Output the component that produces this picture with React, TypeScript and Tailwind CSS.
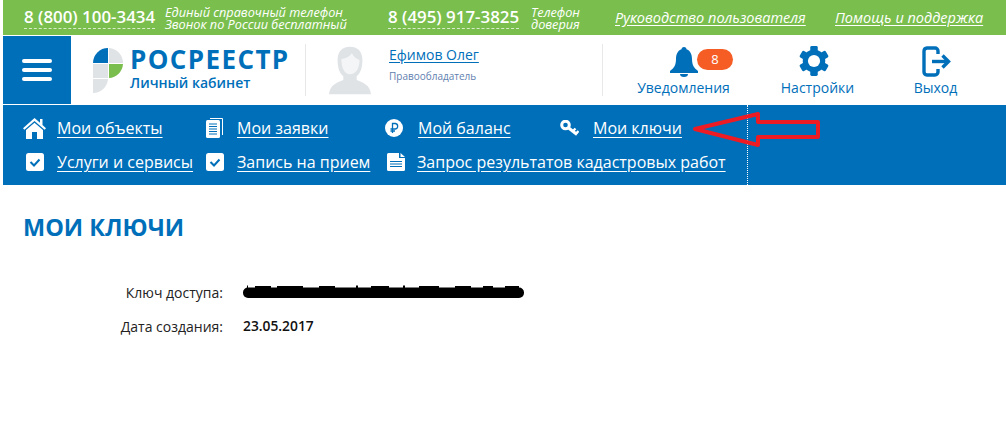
import React from "react";

const font = { fontFamily: '"Open Sans", "Noto Sans", sans-serif' };

function Logo() {
  return (
    <svg width="31" height="45" viewBox="0 0 31 45">
      <path d="M0 15 A15 15 0 0 1 15 0 V15 Z" fill="#006fba" />
      <path d="M16 0 A15 15 0 0 1 30 15 H16 Z" fill="#dfe3e6" />
      <rect x="0" y="16" width="15" height="14" fill="#dfe3e6" />
      <path d="M16 16 H30 A15 15 0 0 1 16 30 Z" fill="#7abf4d" />
      <path d="M0 31 H15 A15 15 0 0 1 0 45 Z" fill="#dfe3e6" />
    </svg>
  );
}

function Avatar() {
  return (
    <svg width="42" height="49" viewBox="0 0 44 50" fill="#dfe3e6">
      <path d="M22 0 C31 0 35 6 35 14 C35 22 33 28 29 31 V35 C36 38 43 40 44 50 H0 C1 40 8 38 15 35 V31 C11 28 9 22 9 14 C9 6 13 0 22 0 Z" />
      <path d="M13 13 C17 13 21 11 24 7 C26 11 29 13 32 14 C32 23 28 29 22 29 C16 29 13 22 13 13 Z" fill="#f4f5f6" />
    </svg>
  );
}

function Bell() {
  return (
    <svg width="28" height="30" viewBox="0 0 28 30" fill="#006fba">
      <circle cx="14" cy="2.5" r="2.5" />
      <path d="M14 2 C20 2 22 7 22 12 C22 18 24 21 28 24 V26 H0 V24 C4 21 6 18 6 12 C6 7 8 2 14 2 Z" />
      <path d="M10 27 H18 A4 3 0 0 1 10 27 Z" />
    </svg>
  );
}

function Gear() {
  return (
    <svg width="30" height="30" viewBox="0 0 32 32">
      <g fill="#006fba">
        <rect x="12" y="0" width="8" height="32" rx="1.5" />
        <rect x="12" y="0" width="8" height="32" rx="1.5" transform="rotate(60 16 16)" />
        <rect x="12" y="0" width="8" height="32" rx="1.5" transform="rotate(120 16 16)" />
        <circle cx="16" cy="16" r="12" />
      </g>
      <circle cx="16" cy="16" r="6.5" fill="#fff" />
    </svg>
  );
}

function Exit() {
  return (
    <svg width="29" height="31" viewBox="0 0 29 31" fill="none" stroke="#006fba" strokeWidth="3.4">
      <path d="M13 2 H5 A3.2 3.2 0 0 0 2 5 V26 A3.2 3.2 0 0 0 5 29 H13 A3 3 0 0 0 16 26 V23" />
      <path d="M16 8 V5 A3 3 0 0 0 13 2" />
      <path d="M10 15.5 H26" />
      <path d="M20.5 9.5 L26.5 15.5 L20.5 21.5" />
    </svg>
  );
}

function Check() {
  return (
    <svg width="18" height="18" viewBox="0 0 18 18">
      <rect width="18" height="18" rx="2.5" fill="#fff" />
      <path d="M4.5 9 L8 12.5 L13.5 6.5" fill="none" stroke="#006fba" strokeWidth="2" />
    </svg>
  );
}

function Home() {
  return (
    <svg width="23" height="21" viewBox="0 0 23 21" fill="#fff">
      <path d="M11.5 0 L17 4.8 V1 H19.5 V7 L23 10.2 L21.6 11.8 L11.5 3 L1.4 11.8 L0 10.2 Z" />
      <path d="M11.5 4.8 L20 12 V21 H14 V14 H9 V21 H3 V12 Z" />
    </svg>
  );
}

function Docs() {
  return (
    <svg width="17" height="20" viewBox="0 0 17 20">
      <path d="M4 0.5 H16.5 V17" fill="none" stroke="#fff" strokeWidth="1" />
      <rect x="0" y="2" width="14" height="18" rx="1.5" fill="#fff" />
      <path d="M3 6 H11 M3 8.5 H11 M3 11 H11 M3 13.5 H11 M3 16 H11" stroke="#006fba" strokeWidth="1" />
    </svg>
  );
}

function Ruble() {
  return (
    <svg width="18" height="18" viewBox="0 0 18 18">
      <circle cx="9" cy="9" r="9" fill="#fff" />
      <path d="M7.5 14 V4.5 H10.4 A2.8 2.8 0 0 1 10.4 10 H5.5 M5.5 12 H10" fill="none" stroke="#006fba" strokeWidth="1.3" />
    </svg>
  );
}

function KeyIcon() {
  return (
    <svg width="19" height="17" viewBox="0 0 19 17" fill="none" stroke="#fff">
      <circle cx="5.5" cy="5" r="3.8" strokeWidth="3" />
      <path d="M8 7.5 L17 14.5" strokeWidth="3" />
      <path d="M13 11 L15.5 8.5 M16 13.5 L18.5 11" strokeWidth="2.4" />
    </svg>
  );
}

function DocIcon() {
  return (
    <svg width="18" height="18" viewBox="0 0 18 18">
      <path d="M0 1.5 A1.5 1.5 0 0 1 1.5 0 H12 V5 H18 V16.5 A1.5 1.5 0 0 1 16.5 18 H1.5 A1.5 1.5 0 0 1 0 16.5 Z" fill="#fff" />
      <path d="M13.5 0 L18 4 H13.5 Z" fill="#fff" />
      <path d="M3 8.5 H15 M3 11 H15 M3 13.5 H15" stroke="#006fba" strokeWidth="1.2" />
    </svg>
  );
}

function Redaction() {
  return (
    <svg width="282" height="14" viewBox="0 0 282 14" fill="#000">
      <rect x="0" y="2.5" width="281" height="10.5" rx="5" />
      <path d="M4 3 V0.5 H5 V3 Z M12 3 V1 H28 V3 Z M34 3 V1 H60 V3 Z M76 3 V1 H92 V3 Z M113 3 V0.5 H115 V3 Z M128 3 V1 H146 V3 Z M160 3 V0.5 H162 V3 Z M176 3 V1 H196 V3 Z M212 3 V1 H228 V3 Z M240 3 V1 H250 V3 Z M262 3 V1 H276 V3 Z" />
    </svg>
  );
}

function NavItem({ icon, text, w }: { icon: React.ReactNode; text: string; w: string }) {
  return (
    <div className={`flex items-center ${w}`}>
      {icon}
      <a className="text-white underline underline-offset-[3px] text-[16px] leading-[22px] whitespace-nowrap">{text}</a>
    </div>
  );
}

export default function App() {
  return (
    <div className="w-[1006px] h-[435px] bg-white pl-[3px] overflow-hidden" style={font}>
      <div className="h-[35px] bg-[#7abf4d] text-white flex items-center pl-[21px]">
        <div className="w-[131px] font-semibold text-[16.9px] leading-[22px] border-b border-dashed border-white/70 whitespace-nowrap">8 (800) 100-3434</div>
        <div className="ml-[10px] w-[223px] italic text-[12.7px] leading-[12px] whitespace-nowrap">
          <div>Единый справочный телефон</div>
          <div>Звонок по России бесплатный</div>
        </div>
        <div className="w-[131px] font-semibold text-[16.9px] leading-[22px] border-b border-dashed border-white/70 whitespace-nowrap">8 (495) 917-3825</div>
        <div className="ml-[12px] w-[84px] italic text-[12.7px] leading-[12px]">
          <div>Телефон</div>
          <div>доверия</div>
        </div>
        <a className="italic text-[14.5px] underline underline-offset-2 whitespace-nowrap w-[220px]">Руководство пользователя</a>
        <a className="italic text-[14.5px] underline underline-offset-2 whitespace-nowrap">Помощь и поддержка</a>
      </div>

      <div className="mt-px h-[68px] flex items-center">
        <div className="w-[68px] h-[68px] bg-[#006fba] flex flex-col justify-center items-center gap-[5px]">
          <div className="w-[30px] h-[4px] rounded-full bg-white" />
          <div className="w-[30px] h-[4px] rounded-full bg-white" />
          <div className="w-[30px] h-[4px] rounded-full bg-white" />
        </div>
        <div className="ml-[22px] flex items-center w-[212px]">
          <Logo />
          <div className="ml-[6px] text-[#006fba] -mt-[3px]">
            <div className="font-bold text-[26px] leading-[28px] tracking-[1.4px] whitespace-nowrap">РОСРЕЕСТР</div>
            <div className="font-semibold text-[14px] leading-[20px] whitespace-nowrap">Личный кабинет</div>
          </div>
        </div>
        <div className="w-px h-[52px] bg-[#e6e8ea]" />
        <div className="ml-[23px] w-[60px]"><Avatar /></div>
        <div className="w-[213px] -mt-[13px]">
          <a className="text-[#006fba] underline underline-offset-2 text-[14px] leading-[20px] block">Ефимов Олег</a>
          <div className="text-[#5f7fb0] text-[10px] leading-[14px] mt-[4px]">Правообладатель</div>
        </div>
        <div className="w-px h-[52px] bg-[#e6e8ea]" />
        <div className="w-[400px] h-[68px] flex text-[#006fba] text-[14px]">
          <div className="w-[161px] flex flex-col items-center pt-[11px]">
            <div className="h-[30px] flex items-start relative left-[18px]">
              <Bell />
              <div className="-ml-[1px] mt-[2px] w-[36px] h-[21px] rounded-full bg-[#f55d24] text-white text-[13px] leading-[21px] text-center">8</div>
            </div>
            <div className="leading-[20px] mt-[1px] whitespace-nowrap">Уведомления</div>
          </div>
          <div className="w-[107px] flex flex-col items-center pt-[10px]">
            <span className="relative -left-[4px]"><Gear /></span>
            <div className="leading-[20px] mt-[2px]">Настройки</div>
          </div>
          <div className="w-[129px] flex flex-col items-center pt-[10px]">
            <span className="relative left-[1px]"><Exit /></span>
            <div className="leading-[20px] mt-[1px]">Выход</div>
          </div>
        </div>
      </div>

      <div className="mt-px h-[80px] bg-[#006fba] relative pl-[20px] pt-[11px]">
        <div className="flex h-[24px]">
          <NavItem w="w-[183px]" text="Мои объекты" icon={<span className="w-[34px] shrink-0"><Home /></span>} />
          <NavItem w="w-[179px]" text="Мои заявки" icon={<span className="w-[31px] shrink-0"><Docs /></span>} />
          <NavItem w="w-[175px]" text="Мой баланс" icon={<span className="w-[33px] shrink-0"><Ruble /></span>} />
          <NavItem w="w-[160px]" text="Мои ключи" icon={<span className="w-[33px] shrink-0"><KeyIcon /></span>} />
        </div>
        <div className="flex h-[24px] mt-[10px]">
          <NavItem w="w-[183px]" text="Услуги и сервисы" icon={<span className="w-[34px] pl-[3px] shrink-0"><Check /></span>} />
          <NavItem w="w-[181px]" text="Запись на прием" icon={<span className="w-[31px] shrink-0"><Check /></span>} />
          <NavItem w="w-[340px]" text="Запрос результатов кадастровых работ" icon={<span className="w-[30px] shrink-0"><DocIcon /></span>} />
        </div>
        <div className="absolute left-[744px] top-0 h-full border-l border-dotted border-white" />
        <svg className="absolute left-[688px] top-[7px]" width="132" height="36" viewBox="0 0 132 36" fill="none">
          <path d="M4 17 L67 2 V10 H127 V25 H67 V33 Z" stroke="#ed1c24" strokeWidth="4" strokeLinejoin="round" />
        </svg>
      </div>

      <h1 className="pl-[20px] mt-[25px] font-bold text-[#006fba] text-[23.5px] leading-[34px]">МОИ КЛЮЧИ</h1>

      <div className="mt-[36px] text-[14px] text-[#222]">
        <div className="flex items-center h-[24px]">
          <div className="w-[220px] text-right">Ключ доступа:</div>
          <div className="ml-[20px] flex items-center h-[14px]"><Redaction /></div>
        </div>
        <div className="flex items-center h-[24px] mt-[10px]">
          <div className="w-[220px] text-right">Дата создания:</div>
          <div className="ml-[20px] font-semibold text-[13.8px] text-[#111]">23.05.2017</div>
        </div>
      </div>
    </div>
  );
}
